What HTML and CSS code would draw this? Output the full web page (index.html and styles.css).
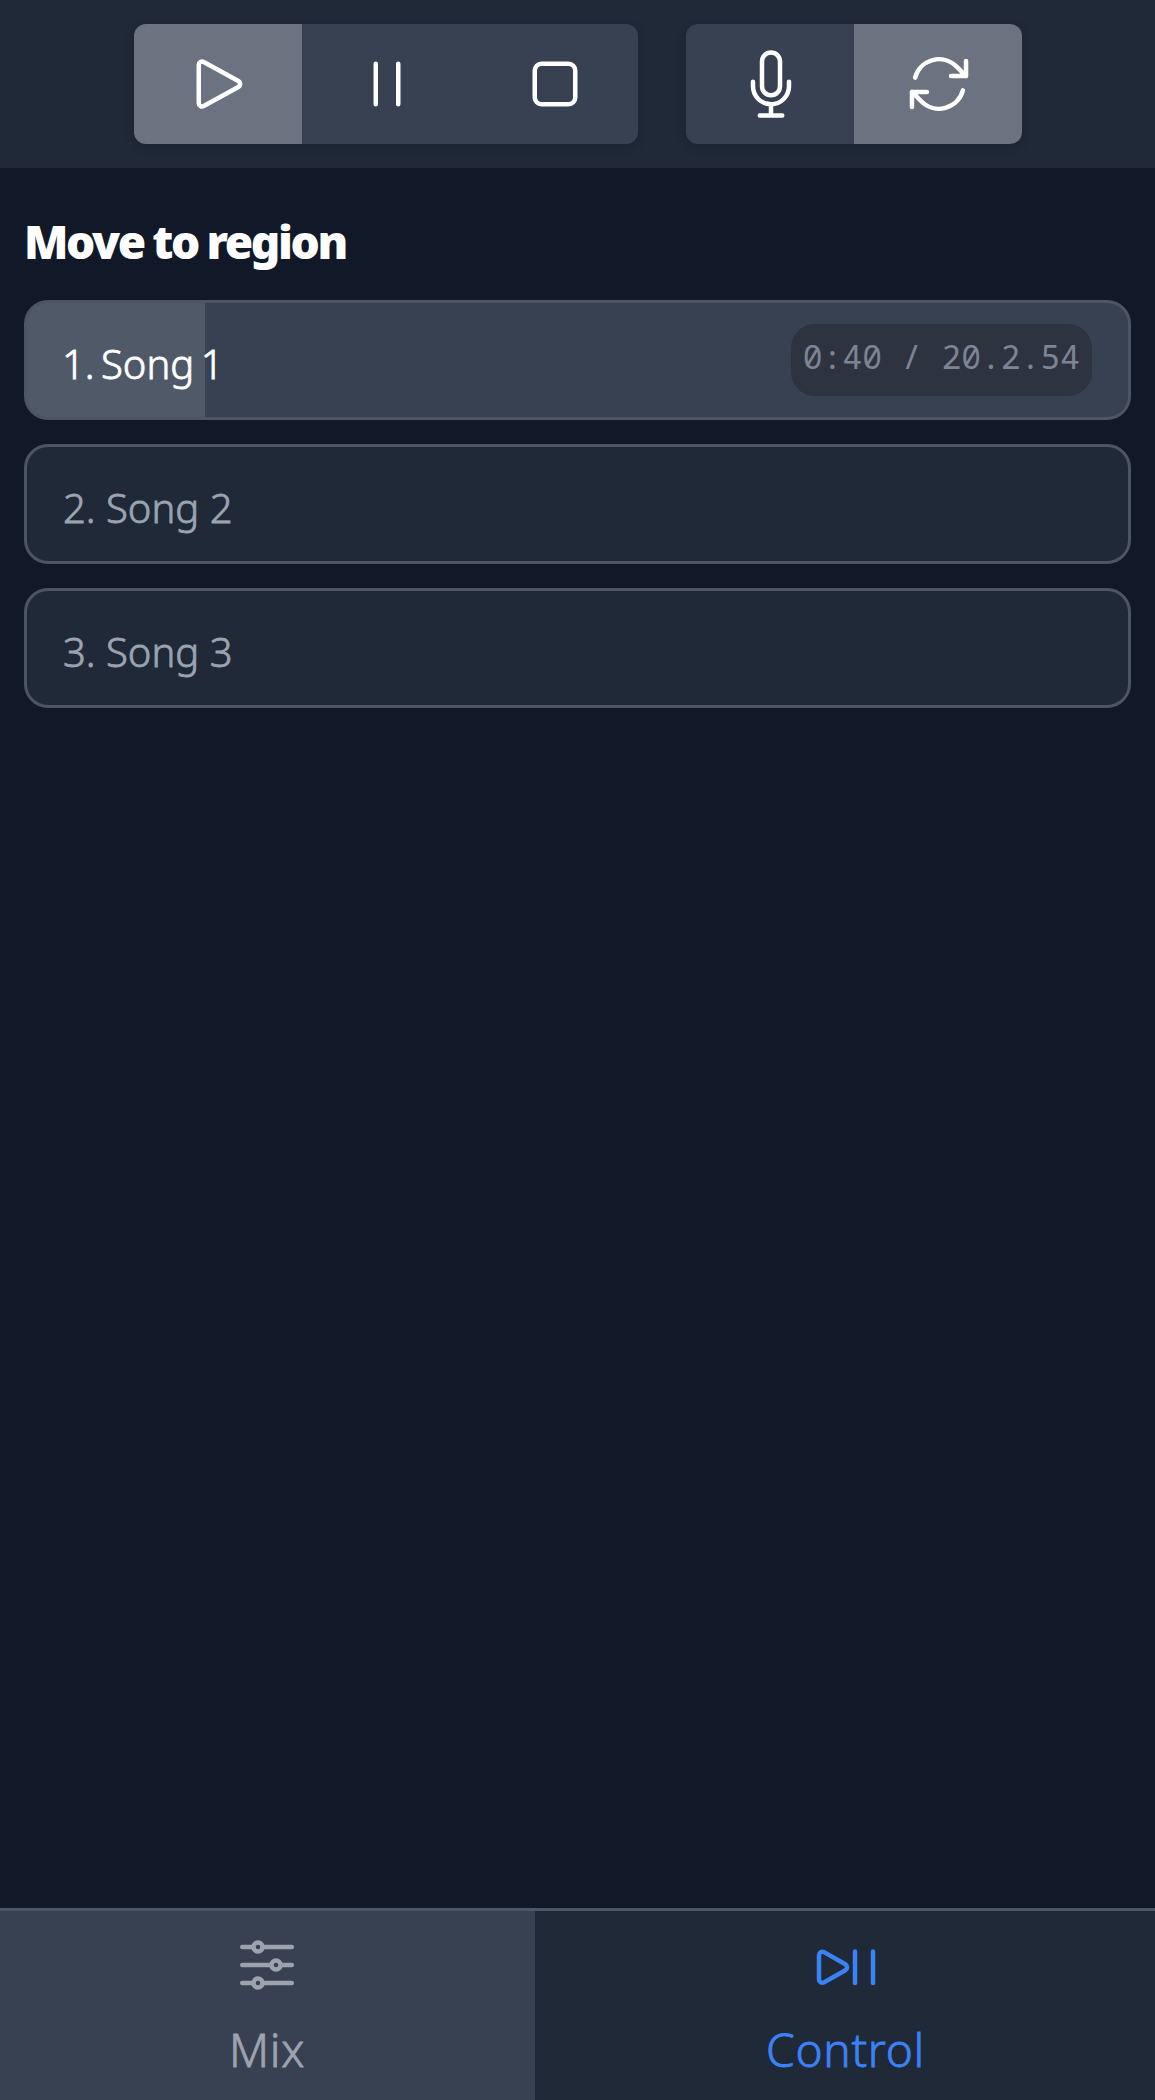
FILE: index.html
```html
<!DOCTYPE html>
<html lang="en">
<head>
<meta charset="utf-8">
<title>Control</title>
<link rel="stylesheet" href="styles.css">
</head>
<body>
<div class="app">
  <header class="transport">
    <div class="group">
      <button class="btn active" aria-label="Play"><svg class="icon" viewBox="0 0 24 24"><path d="M5.25 5.653c0-.856.917-1.398 1.667-.986l11.54 6.347a1.125 1.125 0 010 1.972l-11.54 6.347a1.125 1.125 0 01-1.667-.986V5.653z"/></svg></button>
      <button class="btn" aria-label="Pause"><svg class="icon" viewBox="0 0 24 24"><path d="M15.75 5.25v13.5m-7.5-13.5v13.5"/></svg></button>
      <button class="btn" aria-label="Stop"><svg class="icon" viewBox="0 0 24 24"><path d="M5.25 7.5A2.25 2.25 0 017.5 5.25h9a2.25 2.25 0 012.25 2.25v9a2.25 2.25 0 01-2.25 2.25h-9a2.25 2.25 0 01-2.25-2.25v-9z"/></svg></button>
    </div>
    <div class="group">
      <button class="btn" aria-label="Record"><svg class="icon" viewBox="0 0 24 24"><path d="M12 18.75a6 6 0 006-6v-1.5m-6 7.5a6 6 0 01-6-6v-1.5m6 7.5v3.75m-3.75 0h7.5M12 15.75a3 3 0 01-3-3V4.5a3 3 0 116 0v8.25a3 3 0 01-3 3z"/></svg></button>
      <button class="btn active" aria-label="Loop"><svg class="icon" viewBox="0 0 24 24"><path d="M16.023 9.348h4.992v-.001M2.985 19.644v-4.992m0 0h4.992m-4.993 0l3.181 3.183a8.25 8.25 0 0013.803-3.7M4.031 9.865a8.25 8.25 0 0113.803-3.7l3.181 3.182m0-4.991v4.99"/></svg></button>
    </div>
  </header>
  <main class="content">
    <h1 class="title">Move to region</h1>
    <div class="regions">
      <div class="region current">
        <span class="name">1. Song 1</span>
        <span class="time">0:40 / 20.2.54</span>
      </div>
      <div class="region"><span class="name">2. Song 2</span></div>
      <div class="region"><span class="name">3. Song 3</span></div>
    </div>
  </main>
  <nav class="tabs">
    <a class="tab mix"><svg class="icon" viewBox="0 0 24 24"><path d="M10.5 6h9.75M10.5 6a1.5 1.5 0 11-3 0m3 0a1.5 1.5 0 10-3 0M3.75 6H7.5m3 12h9.75m-9.75 0a1.5 1.5 0 01-3 0m3 0a1.5 1.5 0 00-3 0m-3.75 0H7.5m9-6h3.75m-3.75 0a1.5 1.5 0 01-3 0m3 0a1.5 1.5 0 00-3 0m-9.75 0h9.75"/></svg><span class="label">Mix</span></a>
    <a class="tab control"><svg class="icon" viewBox="0 0 24 24"><path d="M21 7.5V18M15 7.5V18M3 16.811V8.69c0-.864.933-1.406 1.683-.977l7.108 4.061a1.125 1.125 0 010 1.954l-7.108 4.061A1.125 1.125 0 013 16.811z"/></svg><span class="label">Control</span></a>
  </nav>
</div>
</body>
</html>
```
FILE: styles.css
```css
* { box-sizing: border-box; }
body { margin: 0; background: #111827; font-family: "Noto Sans", sans-serif; }
.app { height: 2100px; display: flex; flex-direction: column; }
.icon { display: block; width: 72px; height: 72px; fill: none; stroke: currentColor; stroke-width: 1.5; stroke-linecap: round; stroke-linejoin: round; }

.transport { height: 168px; padding: 24px 0 24px 1px; display: flex; justify-content: center; gap: 48px; background: #1f2937; }
.group { display: flex; border-radius: 12px; overflow: hidden; box-shadow: 0 3px 12px rgba(0, 0, 0, 0.1); }
.btn { width: 168px; height: 120px; margin: 0; padding: 0 0 0 2px; border: 0; display: flex; align-items: center; justify-content: center; background: #374151; color: #fff; }
.active { background: #6b7280; }

.content { flex: 1; padding: 46px 24px 0; }
.title { margin: 0 0 26px; height: 60px; line-height: 54px; color: #fff; font-size: 46px; font-weight: 900; letter-spacing: -2.4px; word-spacing: -1px; }
.regions { display: flex; flex-direction: column; gap: 24px; }
.region { height: 120px; padding: 0 36px; display: flex; align-items: center; justify-content: space-between; border: 3px solid #4b5563; border-radius: 24px; background: #1f2937; color: #9ca3af; }
.name { padding-top: 8px; font-size: 40px; font-weight: 300; line-height: 60px; -webkit-text-stroke: 0.8px currentColor; }
.current { background: linear-gradient(to right, #505967 178px, #374151 178px); color: #fff; }
.current .name { margin-left: -1px; word-spacing: -4px; }
.time { height: 72px; padding: 0 12px; border-radius: 24px; background: #2d3440; color: #7d8494; font-family: "Noto Sans Mono", "DejaVu Sans Mono", monospace; font-size: 33px; line-height: 65px; white-space: nowrap; }

.tabs { height: 192px; display: flex; border-top: 3px solid #4b5563; }
.tab { display: flex; flex-direction: column; align-items: center; padding-top: 18px; }
.mix { width: 535px; padding-right: 1px; background: #374151; color: #9ca3af; }
.control { flex: 1; padding-left: 1px; background: #1f2937; color: #3b82f6; }
.label { margin-top: 12px; font-size: 46px; font-weight: 300; line-height: 72px; letter-spacing: 0.7px; -webkit-text-stroke: 0.8px currentColor; }
```
